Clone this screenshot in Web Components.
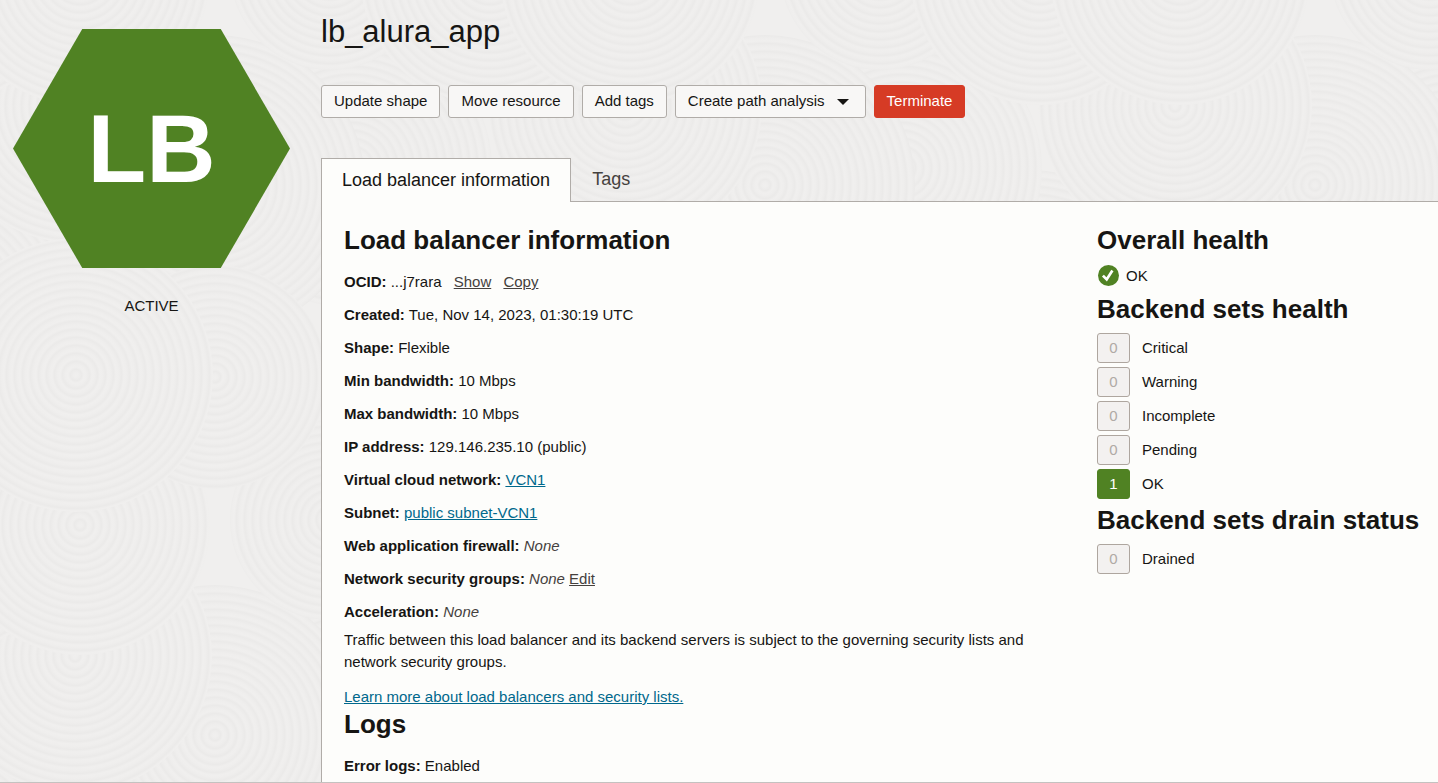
<!DOCTYPE html>
<html lang="en">
<head>
<meta charset="utf-8">
<meta name="viewport" content="width=device-width, initial-scale=1">
<title>lb_alura_app</title>
<style>
  html, body { margin: 0; }
  body {
    font: 15px/22px "Liberation Sans", Arial, sans-serif;
    color: #161513;
    background: #f0efee;
    --ink-soft: #45413e;
    --link: #00688c;
    --ok: #508223;
    --danger: #d63b25;
    --line: #b0aca8;
    --surface: #fdfdfb;
  }
</style>
</head>
<body>
<lb-page>
  <status-hexagon slot="side" code="LB">ACTIVE</status-hexagon>
  <span slot="title">lb_alura_app</span>
  <action-button slot="actions">Update shape</action-button>
  <action-button slot="actions">Move resource</action-button>
  <action-button slot="actions">Add tags</action-button>
  <action-button slot="actions" menu>Create path analysis</action-button>
  <action-button slot="actions" danger>Terminate</action-button>
  <page-tab slot="tabs" selected>Load balancer information</page-tab>
  <page-tab slot="tabs">Tags</page-tab>

  <info-section slot="info" heading="Load balancer information">
    <fact-row label="OCID:">...j7rara <text-link plain spaced>Show</text-link><text-link plain spaced>Copy</text-link></fact-row>
    <fact-row label="Created:">Tue, Nov 14, 2023, 01:30:19 UTC</fact-row>
    <fact-row label="Shape:">Flexible</fact-row>
    <fact-row label="Min bandwidth:">10 Mbps</fact-row>
    <fact-row label="Max bandwidth:">10 Mbps</fact-row>
    <fact-row label="IP address:">129.146.235.10 (public)</fact-row>
    <fact-row label="Virtual cloud network:"><text-link>VCN1</text-link></fact-row>
    <fact-row label="Subnet:"><text-link>public subnet-VCN1</text-link></fact-row>
    <fact-row label="Web application firewall:"><empty-value></empty-value></fact-row>
    <fact-row label="Network security groups:"><empty-value></empty-value> <text-link plain>Edit</text-link></fact-row>
    <fact-row label="Acceleration:"><empty-value></empty-value></fact-row>
    <info-note>Traffic between this load balancer and its backend servers is subject to the governing security lists and network security groups.
      <text-link slot="more">Learn more about load balancers and security lists.</text-link>
    </info-note>
  </info-section>
  <info-section slot="info" heading="Logs">
    <fact-row label="Error logs:">Enabled</fact-row>
  </info-section>

  <health-section slot="health" heading="Overall health">
    <health-status>OK</health-status>
  </health-section>
  <health-section slot="health" heading="Backend sets health">
    <health-count count="0">Critical</health-count>
    <health-count count="0">Warning</health-count>
    <health-count count="0">Incomplete</health-count>
    <health-count count="0">Pending</health-count>
    <health-count count="1" ok>OK</health-count>
  </health-section>
  <health-section slot="health" heading="Backend sets drain status">
    <health-count count="0">Drained</health-count>
  </health-section>
</lb-page>

<script>
  const define = (name, render) => customElements.define(name, class extends HTMLElement {
    constructor() {
      super();
      this.attachShadow({ mode: 'open' });
    }
    connectedCallback() {
      this.shadowRoot.innerHTML = render(this);
    }
  });

  const headingStyle = 'h2 { margin: 0; font-size: 26px; line-height: 32px; font-weight: bold; }';

  // Repeating sand-garden texture: overlapping discs filled with concentric rings.
  define('ripple-backdrop', () => {
    const tile = 550;
    const discs = [
      [480, 320, 150], [352, 168, 140], [215, 185, 150], [75, 106, 137],
      [330, 520, 100], [490, 525, 130], [80, 525, 130], [215, 377, 112],
      [76, 375, 137]
    ];
    const shifts = [-tile, 0, tile];
    const shapes = discs.map(([x, y, r]) =>
      shifts.map(dx => shifts.map(dy =>
        `<circle r="${r}" fill="url(#rings)" transform="translate(${x + dx} ${y + dy})"/>`
      ).join('')).join('')).join('');
    return `
      <style>
        :host { position: absolute; inset: 0; z-index: -1; }
        svg { display: block; width: 100%; height: 100%; }
      </style>
      <svg aria-hidden="true">
        <defs>
          <radialGradient id="rings" gradientUnits="userSpaceOnUse" cx="0" cy="0" r="8" spreadMethod="repeat">
            <stop offset="0" stop-color="#f0efee"/>
            <stop offset=".3" stop-color="#efeeed"/>
            <stop offset=".7" stop-color="#ebeae9"/>
            <stop offset="1" stop-color="#f0efee"/>
          </radialGradient>
          <pattern id="tile" width="${tile}" height="${tile}" patternUnits="userSpaceOnUse">${shapes}</pattern>
        </defs>
        <rect width="100%" height="100%" fill="url(#tile)"/>
      </svg>`;
  });

  define('lb-page', () => `
    <style>
      :host {
        display: grid; grid-template-columns: 321px minmax(0, 1fr);
        position: relative; z-index: 0; box-sizing: border-box;
        min-height: 100vh; overflow: hidden; border-bottom: 1px solid #c4c2c0;
      }
      aside { padding: 29px 31px 0 13px; }
      main { display: flex; flex-direction: column; padding-top: 14px; }
      h1 { margin: 0 0 35px; font-size: 31px; line-height: 36px; font-weight: normal; }
      .actions { display: flex; flex-wrap: wrap; gap: 8px; margin-bottom: 40px; }
      .tabs { display: flex; position: relative; z-index: 1; }
      .panel {
        flex: 1; display: grid; grid-template-columns: minmax(0, 1fr) 341px; column-gap: 36px;
        margin-top: -1px; padding: 22px 0 0 22px;
        background: var(--surface); border: 1px solid var(--line); border-width: 1px 0 0 1px;
      }
    </style>
    <ripple-backdrop></ripple-backdrop>
    <aside><slot name="side"></slot></aside>
    <main>
      <h1><slot name="title"></slot></h1>
      <div class="actions"><slot name="actions"></slot></div>
      <div class="tabs" role="tablist"><slot name="tabs"></slot></div>
      <div class="panel">
        <div><slot name="info"></slot></div>
        <div><slot name="health"></slot></div>
      </div>
    </main>`);

  define('status-hexagon', el => `
    <style>
      :host { display: block; text-align: center; }
      .shape {
        display: grid; place-items: center; height: 239px;
        font-size: 96px; line-height: 110px; font-weight: bold; color: #fff;
        background: var(--ok);
        clip-path: polygon(25% 0, 75% 0, 100% 50%, 75% 100%, 25% 100%, 0 50%);
      }
      p { margin: 27px 0 0; }
    </style>
    <div class="shape"><span>${el.getAttribute('code')}</span></div>
    <p><slot></slot></p>`);

  define('action-button', el => `
    <style>
      :host { display: block; }
      button {
        display: flex; align-items: center; height: 33px; padding: 0 12px 2px;
        font: inherit; color: inherit; white-space: nowrap;
        background: #f8f7f6; border: 1px solid var(--line); border-radius: 3px;
      }
      :host([danger]) button { color: #fff; background: var(--danger); border-color: var(--danger); }
      svg { margin: 2px 4px 0 12px; }
    </style>
    <button type="button"><slot></slot>${el.hasAttribute('menu')
      ? '<svg width="12" height="6" viewBox="0 0 12 6" aria-hidden="true"><path d="M0 0h12L6 6z" fill="#161513"/></svg>' : ''}</button>`);

  define('page-tab', el => `
    <style>
      :host { display: block; }
      button {
        height: 43px; padding: 0 20px 2px; border: 1px solid transparent; border-bottom: 0;
        font: inherit; font-size: 18px; color: var(--ink-soft); background: none;
      }
      :host([selected]) button {
        height: 44px; color: #161513; background: var(--surface); border-color: var(--line);
      }
    </style>
    <button type="button" role="tab" aria-selected="${el.hasAttribute('selected')}"><slot></slot></button>`);

  define('info-section', el => `
    <style>
      :host { display: block; }
      ${headingStyle}
      h2 { margin-bottom: 9px; }
    </style>
    <h2>${el.getAttribute('heading')}</h2><slot></slot>`);

  define('fact-row', el => `
    <style>:host { display: block; line-height: 33px; }</style>
    <b>${el.getAttribute('label')}</b> <slot></slot>`);

  define('text-link', () => `
    <style>
      a { color: var(--link); text-decoration: underline; }
      :host([plain]) a { color: var(--ink-soft); }
      :host([spaced]) { margin-left: 8px; }
    </style><a href="#"><slot></slot></a>`);

  define('empty-value', () => `
    <style>i { color: var(--ink-soft); }</style><i>None</i>`);

  define('info-note', () => `
    <style>
      :host { display: block; }
      p { margin: 0; padding: 1px 0 13px; }
      div { line-height: 22px; }
    </style>
    <p><slot></slot></p><div><slot name="more"></slot></div>`);

  define('health-section', el => `
    <style>
      :host { display: block; margin-bottom: 5px; }
      ${headingStyle}
      h2 { margin-bottom: 8px; }
      div { display: grid; gap: 4px; }
    </style>
    <h2>${el.getAttribute('heading')}</h2><div><slot></slot></div>`);

  define('health-status', () => `
    <style>:host { display: flex; align-items: center; gap: 7px; height: 24px; }</style>
    <svg width="22" height="22" viewBox="0 0 22 22" aria-hidden="true">
      <circle cx="11.5" cy="10.5" r="10.5" fill="#508223"/>
      <path d="M5.9 10.6l3.8 3.8L15.4 5.6" fill="none" stroke="#fff" stroke-width="2.7"/>
    </svg>
    <span><slot></slot></span>`);

  define('health-count', el => `
    <style>
      :host { display: flex; align-items: center; gap: 12px; height: 30px; }
      span {
        box-sizing: border-box; width: 33px; height: 30px; line-height: 28px; text-align: center;
        color: #b0aaa5; background: #f3f1f0; border: 1px solid #aea69f; border-radius: 3px;
      }
      :host([ok]) span { color: #fff; background: var(--ok); border-color: var(--ok); }
    </style>
    <span>${el.getAttribute('count')}</span><div><slot></slot></div>`);
</script>
</body>
</html>
